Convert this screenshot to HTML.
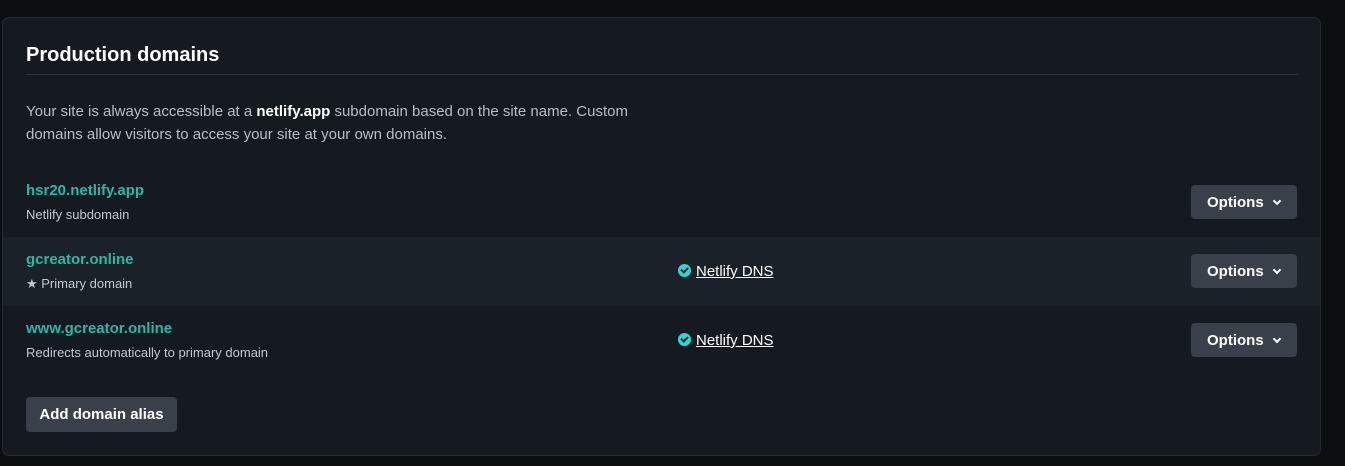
<!DOCTYPE html><html><head><style>
body{margin:0;background:#0c0f12;width:1345px;height:466px;overflow:hidden;font-family:"Liberation Sans",sans-serif;}
.card{position:absolute;left:2px;top:17px;width:1317px;height:437px;background:#151a21;border:1px solid #252b33;border-radius:7px;}
h2{position:absolute;left:23px;top:26px;margin:0;font-size:20px;color:#fff;font-weight:bold;}
.sep{position:absolute;left:23px;top:56px;width:1272px;height:1px;background:#2c323a;}
p{position:absolute;left:23px;top:82px;margin:0;width:640px;font-size:15px;line-height:23px;color:#b8bec6;}
p b{color:#fff}
.row{position:absolute;left:0;width:1317px;height:69px;}
.row.hl{background:#1b2129}
.dom{position:absolute;left:23px;top:14px;font-size:15px;color:#2fb6a6;font-weight:bold;}
.sub{position:absolute;left:23px;top:39px;font-size:13px;color:#c3c8ce;}
.dns{position:absolute;left:675px;top:26px;font-size:15px;color:#fff;text-decoration:underline;}
.dns i{display:inline-block;width:13px;height:13px;border-radius:50%;background:#2ed8d0;vertical-align:-1px;margin-right:5px;position:relative}
.dns i:after{content:"";position:absolute;left:3px;top:3px;width:5px;height:3px;border-left:2px solid #151a21;border-bottom:2px solid #151a21;transform:rotate(-45deg)}
.opt{position:absolute;left:1188px;top:17px;width:106px;height:34px;background:#3a4049;border-radius:4px;color:#fff;font-size:15px;font-weight:bold;line-height:35px;box-sizing:border-box;padding-left:16px;}
.opt span{display:inline-block;width:4px;height:4px;border-right:2px solid #fff;border-bottom:2px solid #fff;transform:rotate(45deg);margin-left:10px;vertical-align:3px}
.add{position:absolute;left:23px;top:379px;width:151px;height:35px;background:#3a4049;border-radius:4px;color:#fff;font-size:15px;font-weight:bold;line-height:35px;text-align:center;}
</style></head><body><div class="card">
<h2>Production domains</h2><div class="sep"></div>
<p>Your site is always accessible at a <b>netlify.app</b> subdomain based on the site name. Custom domains allow visitors to access your site at your own domains.</p>
<div class="row" style="top:150px"><div class="dom">hsr20.netlify.app</div><div class="sub">Netlify subdomain</div><div class="opt">Options<span></span></div></div>
<div class="row hl" style="top:219px"><div class="dom">gcreator.online</div><div class="sub">★ Primary domain</div><div class="dns"><i></i>Netlify DNS</div><div class="opt">Options<span></span></div></div>
<div class="row" style="top:288px"><div class="dom">www.gcreator.online</div><div class="sub">Redirects automatically to primary domain</div><div class="dns"><i></i>Netlify DNS</div><div class="opt">Options<span></span></div></div>
<div class="add">Add domain alias</div>
</div></body></html>
